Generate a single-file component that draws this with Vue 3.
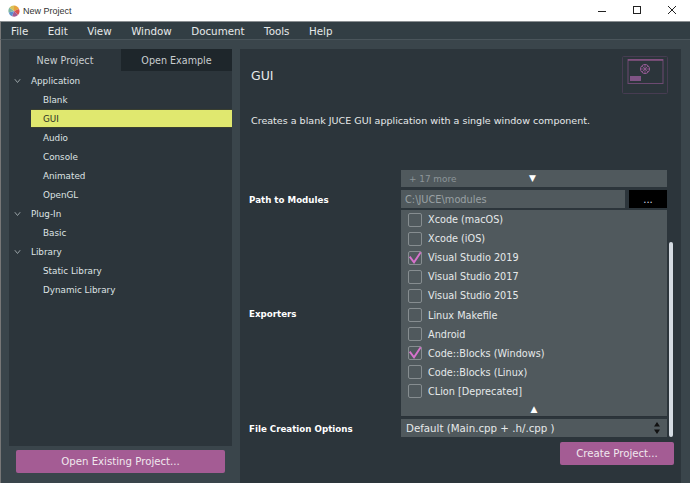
<script setup>
const menus = ['File', 'Edit', 'View', 'Window', 'Document', 'Tools', 'Help']
const tree = [
  { name: 'Application', items: ['Blank', 'GUI', 'Audio', 'Console', 'Animated', 'OpenGL'] },
  { name: 'Plug-In', items: ['Basic'] },
  { name: 'Library', items: ['Static Library', 'Dynamic Library'] },
]
const exporters = [
  ['Xcode (macOS)', false],
  ['Xcode (iOS)', false],
  ['Visual Studio 2019', true],
  ['Visual Studio 2017', false],
  ['Visual Studio 2015', false],
  ['Linux Makefile', false],
  ['Android', false],
  ['Code::Blocks (Windows)', true],
  ['Code::Blocks (Linux)', false],
  ['CLion [Deprecated]', false],
]
</script>

<template>
  <div class="window">
    <header class="titlebar">
      <svg class="logo" width="12" height="12" viewBox="0 0 12 12">
        <path d="M6 6V.5A5.5 5.5 0 0 1 11 4Z" fill="#e8a33d" />
        <path d="M6 6 11 4A5.5 5.5 0 0 1 10 10Z" fill="#d9534f" />
        <path d="M6 6 10 10A5.5 5.5 0 0 1 4 11.3Z" fill="#a45c94" />
        <path d="M6 6 4 11.3A5.5 5.5 0 0 1 .7 7.5Z" fill="#5b8fd0" />
        <path d="M6 6 .7 7.5A5.5 5.5 0 0 1 1.5 2.5Z" fill="#7fb6a0" />
        <path d="M6 6 1.5 2.5A5.5 5.5 0 0 1 6 .5Z" fill="#d8c25a" />
      </svg>
      <span class="title">New Project</span>
      <div class="win-controls">
        <svg width="8" height="9" viewBox="0 0 8 9"><path d="M0 5.500H8" stroke="#222" fill="none" /></svg>
        <svg width="8" height="9" viewBox="0 0 8 9"><rect x=".5" y=".5" width="7" height="7" stroke="#222" fill="none" /></svg>
        <svg width="8" height="9" viewBox="0 0 8 9"><path d="M0 0 8 8M8 0 0 8" stroke="#222" fill="none" /></svg>
      </div>
    </header>

    <nav class="menubar">
      <span v-for="m in menus" :key="m" class="menu">{{ m }}</span>
    </nav>

    <main class="body">
      <section class="left">
        <div class="left-panel">
          <div class="tabs">
            <div class="tab">New Project</div>
            <div class="tab tab-dark">Open Example</div>
          </div>
          <div class="tree">
            <template v-for="g in tree" :key="g.name">
              <div class="group">
                <svg class="chev" width="7" height="6" viewBox="0 0 7 6"><path d="M.8 1.200 3.500 4.500 6.200 1.200" stroke="#97a0a4" fill="none" /></svg>
                {{ g.name }}
              </div>
              <div v-for="i in g.items" :key="i" class="leaf" :class="{ selected: i === 'GUI' }">{{ i }}</div>
            </template>
          </div>
        </div>
        <button class="btn btn-open">Open Existing Project...</button>
      </section>

      <section class="right">
        <div class="head">
          <h1 class="heading">GUI</h1>
          <svg class="thumb" width="47" height="39" viewBox="0 0 47 39">
            <rect x=".5" y=".5" width="45" height="37" rx="1" fill="none" stroke="#473c52" />
            <rect x="6" y="3.500" width="35" height="24" fill="none" stroke="#6d4a72" />
            <path d="M6 4H41" stroke="#8a5486" stroke-width="1.500" />
            <circle cx="23" cy="13" r="4.500" fill="none" stroke="#9b5d9a" />
            <path d="M23 9V17M19 13H27M20 10 26 16M26 10 20 16" stroke="#9b5d9a" stroke-width=".7" />
            <rect x="8" y="20" width="11" height="5" fill="#7f5485" />
          </svg>
        </div>
        <p class="desc">Creates a blank JUCE GUI application with a single window component.</p>

        <div class="form">
          <div class="more-row">
            <span class="more">+ 17 more</span>
            <span class="tri">▼</span>
          </div>

          <div class="row path-row">
            <label class="label">Path to Modules</label>
            <div class="path-controls">
              <div class="path-input">C:\JUCE\modules</div>
              <div class="dots">...</div>
            </div>
          </div>

          <div class="row exp-row">
            <label class="label">Exporters</label>
            <div class="exp-list">
              <div v-for="e in exporters" :key="e[0]" class="exp">
                <span class="check">
                  <svg v-if="e[1]" width="14" height="14" viewBox="0 0 14 14"><path d="M1.700 5.700 6 11.300 12.700 1.300" stroke="#d672cc" stroke-width="1.900" fill="none" /></svg>
                </span>
                {{ e[0] }}
              </div>
              <div class="up"><span class="tri tri-up">▲</span></div>
            </div>
          </div>

          <div class="row file-row">
            <label class="label">File Creation Options</label>
            <div class="select">
              <span>Default (Main.cpp + .h/.cpp )</span>
              <svg width="6" height="12" viewBox="0 0 6 12"><path d="M3 0 6 4.500H0ZM3 12 0 7.500H6Z" fill="#111" /></svg>
            </div>
          </div>
          <span class="scroll"></span>
        </div>

        <div class="actions">
          <button class="btn btn-create">Create Project...</button>
        </div>
      </section>
    </main>
  </div>
</template>

<style scoped>
.window {
  width: 690px;
  height: 483px;
  display: flex;
  flex-direction: column;
  background: #e4e6e6;
  font-family: "DejaVu Sans", sans-serif;
  font-size: 10px;
  color: #e6e9ea;
  overflow: hidden;
}
.titlebar {
  height: 21px;
  flex: none;
  background: #fff;
  border-bottom: 1px solid #8a8f92;
  display: flex;
  align-items: center;
  padding-left: 8px;
  color: #333;
}
.logo { margin-right: 3px; }
.title { font-family: "Liberation Sans", sans-serif; font-size: 9px; }
.win-controls { margin-left: auto; display: flex; gap: 27px; padding-right: 14px; }
.menubar {
  height: 17px;
  flex: none;
  background: #323e44;
  display: flex;
  align-items: center;
  border-left: 1px solid #777;
  border-bottom: 1px solid #4a555b;
  padding-left: 10px;
  font-size: 10.300px;
}
.menu { margin-right: 19.500px; }
.body {
  flex: none;
  height: 441px;
  background: #3a454b;
  border-left: 1px solid #777;
  display: flex;
  padding: 9px 9px 8px 8px;
  gap: 8px;
}
.left { width: 223px; flex: none; display: flex; flex-direction: column; }
.left-panel { height: 397px; flex: none; background: #2c353b; }
.tabs { display: flex; height: 22px; font-size: 9.600px; }
.tab { width: 112px; display: flex; align-items: center; justify-content: center; color: #c8cdcf; }
.tab-dark { flex: 1; background: #1e262b; }
.tree { font-size: 8.800px; }
.group, .leaf {
  height: 19px;
  box-sizing: border-box;
  display: flex;
  align-items: center;
}
.chev { margin: 0 10px 0 5px; }
.group { color: #dfe3e4; }
.leaf { padding-left: 34px; color: #dfe3e4; }
.selected {
  margin-left: 22px;
  padding-left: 12px;
  background: #e0e86f;
  color: #2b2f26;
  border: 1px solid #3a3f30;
  border-width: 1px 0;
}
.btn {
  display: block;
  border: 0;
  border-radius: 2px;
  background: #a45c94;
  color: #f0e8ee;
  font: inherit;
  font-size: 10.200px;
  padding: 0;
  height: 23px;
}
.btn-open { margin: 4px 7px 0; width: 209px; }
.right {
  flex: 1;
  background: #2c353b;
  display: flex;
  flex-direction: column;
  padding: 0 7px 7px 9px;
}
.head { height: 50px; flex: none; display: flex; justify-content: space-between; padding: 7px 5px 0 2px; box-sizing: border-box; }
.heading { margin: 10px 0 0; font-size: 12.500px; font-weight: 400; color: #e6e9ea; line-height: 20px; }
.desc { margin: 14px 0 0 2px; font-size: 9.550px; line-height: 16px; height: 57px; }
.form { position: relative; display: flex; flex-direction: column; }
.more-row {
  margin-left: 152px;
  margin-right: 7px;
  height: 17px;
  background: #50595d;
  display: flex;
  align-items: center;
  position: relative;
  color: #8d9599;
  padding-left: 8px;
  margin-bottom: 3px;
  font-size: 8.900px;
}
.tri { color: #fff; font-size: 9px; line-height: 1; }
.more-row .tri { position: absolute; left: 128px; top: 4px; }
.row { display: flex; margin-right: 7px; }
.label { width: 152px; flex: none; font-weight: 700; font-size: 8.700px; color: #fff; align-self: center; padding-top: 1px; }
.path-row { height: 18px; margin-bottom: 2px; }
.path-controls { flex: 1; display: flex; gap: 4px; }
.path-input { flex: 1; background: #50595d; color: #9aa1a4; padding-left: 4px; display: flex; align-items: center; font-size: 9.800px; }
.dots { width: 38px; background: #000; color: #dde; display: flex; align-items: center; justify-content: center; }
.exp-list { flex: 1; background: #50595d; height: 207px; box-sizing: border-box; border-bottom: 1px solid #2a3238; font-size: 9.700px; }
.exp { height: 19.100px; display: flex; align-items: center; }
.check {
  width: 12px;
  height: 12px;
  margin: 0 6px 0 7px;
  border: 1px solid #868d90;
  border-radius: 2px;
  flex: none;
  position: relative;
}
.check svg { position: absolute; left: -1px; top: -1px; }
.up { height: 15px; text-align: center; }
.tri-up { display: block; padding-top: 4px; }
.file-row { height: 18px; margin-top: 2px; }
.select {
  flex: 1;
  background: #50595d;
  display: flex;
  align-items: center;
  justify-content: space-between;
  padding: 0 7px 0 5px;
  font-size: 10.250px;
}
.scroll {
  position: absolute;
  right: 1.500px;
  top: 72px;
  width: 4px;
  height: 195px;
  border-radius: 2px;
  background: #d5dbe2;
}
.actions { display: flex; justify-content: flex-end; margin-top: 5px; }
.btn-create { width: 114px; }
</style>
